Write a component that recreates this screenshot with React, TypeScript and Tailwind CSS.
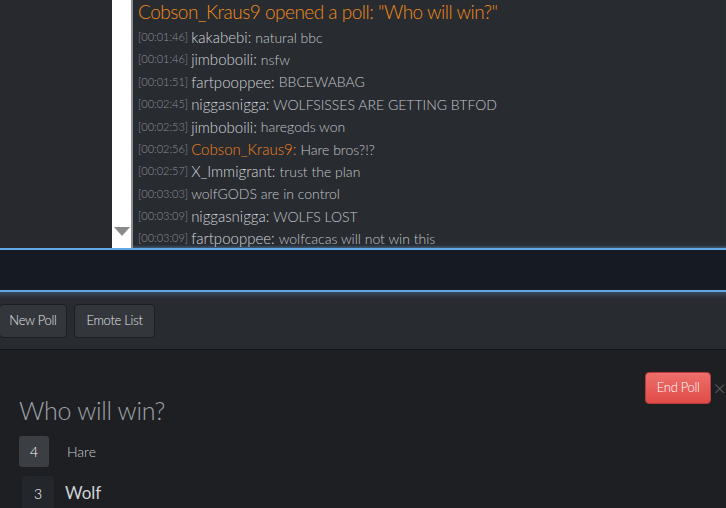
import React from 'react';

type Line = {
  time?: string;
  user?: string;
  text: string;
  highlight?: boolean;
};

const lines: Line[] = [
  { time: '00:01:46', user: 'kakabebi', text: 'natural bbc' },
  { time: '00:01:46', user: 'jimboboili', text: 'nsfw' },
  { time: '00:01:51', user: 'fartpooppee', text: 'BBCEWABAG' },
  { time: '00:02:45', user: 'niggasnigga', text: 'WOLFSISSES ARE GETTING BTFOD' },
  { time: '00:02:53', user: 'jimboboili', text: 'haregods won' },
  { time: '00:02:56', user: 'Cobson_Kraus9', text: 'Hare bros?!?', highlight: true },
  { time: '00:02:57', user: 'X_Immigrant', text: 'trust the plan' },
  { time: '00:03:03', text: 'wolfGODS are in control' },
  { time: '00:03:09', user: 'niggasnigga', text: 'WOLFS LOST' },
  { time: '00:03:09', user: 'fartpooppee', text: 'wolfcacas will not win this' },
];

const ChatLine = ({ line }: { line: Line }) => (
  <div className="h-[22.4px] shrink-0 flex items-center whitespace-nowrap">
    <span className="text-[11px] text-[#8d9096] mr-[3px]">[{line.time}]</span>
    {line.user && (
      <span
        className={
          line.highlight
            ? 'text-[15px] text-[#f0821e] mr-[4px]'
            : 'text-[15px] text-[#d2d5da] mr-[4px]'
        }
      >
        {line.user}:
      </span>
    )}
    <span className="text-[14px] text-[#c3c6cb]">{line.text}</span>
  </div>
);

export default function App() {
  return (
    <div
      className="w-[726px] h-[508px] overflow-hidden bg-[#1e1f23] flex flex-col font-light"
      style={{ fontFamily: 'Lato, "Liberation Sans", sans-serif' }}
    >
      <div className="h-[248px] shrink-0 flex">
        <div className="w-[112px] bg-[#27292e]" />
        <div className="w-[19px] bg-white flex flex-col justify-end items-center pb-[12px]">
          <div className="w-0 h-0 border-l-[8px] border-r-[8px] border-t-[9px] border-l-transparent border-r-transparent border-t-[#8a8a8a]" />
        </div>
        <div className="w-[2px] bg-[#8c8e92]" />
        <div className="flex-1 bg-[#282b30] pl-[5px] flex flex-col overflow-hidden shadow-[inset_0_-3px_3px_-2px_#4a6a88]">
          <div className="shrink-0 text-[19px] leading-[24px] tracking-[-0.5px] text-[#f28c1a] whitespace-nowrap mb-[2px]">
            Cobson_Kraus9 opened a poll: "Who will win?"
          </div>
          {lines.map((l, i) => (
            <ChatLine key={i} line={l} />
          ))}
        </div>
      </div>
      <div className="h-[2px] shrink-0 bg-[#62a8e6]" />
      <div className="h-[40px] shrink-0 bg-[#161a22]" />
      <div className="h-[2px] shrink-0 bg-[#62a8e6]" />
      <div className="h-[58px] shrink-0 bg-gradient-to-b from-[#3a4a5c] via-[#282b30] via-[12%] to-[#282b30] flex items-center gap-[7px] border-b border-[#131417]">
        <button className="-ml-[1px] h-[34px] w-[68px] rounded-[4px] bg-[#33363b] border border-[#1c1e21] text-[13px] text-[#e4e6ea] tracking-[-0.3px]">
          New Poll
        </button>
        <button className="h-[34px] w-[81px] rounded-[4px] bg-[#33363b] border border-[#1c1e21] text-[13px] text-[#e4e6ea] tracking-[-0.3px]">
          Emote List
        </button>
      </div>
      <div className="flex-1 min-h-0 overflow-hidden flex flex-col px-[19px] relative">
        <div className="absolute right-0 top-[22px] flex items-center">
          <button className="h-[32px] w-[66px] rounded-[4px] bg-gradient-to-b from-[#ee6e6b] to-[#e04b47] border border-[#b83c39] text-[13px] text-white tracking-[-0.3px]">
            End Poll
          </button>
          <span className="text-[#64676c] text-[22px] leading-none ml-[2px] font-light">×</span>
        </div>
        <div className="shrink-0 mt-[44px] text-[25px] leading-[32px] tracking-[-0.3px] text-[#9ea2a8]">
          Who will win?
        </div>
        <div className="shrink-0 mt-[10px] flex items-center">
          <div className="w-[30px] h-[31px] rounded-[3px] bg-[#3b3e43] flex items-center justify-center text-[14px] text-white">
            4
          </div>
          <span className="ml-[18px] text-[14px] text-[#c9ccd1]">Hare</span>
        </div>
        <div className="shrink-0 mt-[9px] flex items-center">
          <div className="ml-[3px] w-[32px] h-[34px] rounded-[3px] bg-[#23262a] flex items-center justify-center text-[14px] text-white">
            3
          </div>
          <span className="ml-[11px] text-[17px] font-normal text-[#d0d3d8]">Wolf</span>
        </div>
      </div>
    </div>
  );
}
